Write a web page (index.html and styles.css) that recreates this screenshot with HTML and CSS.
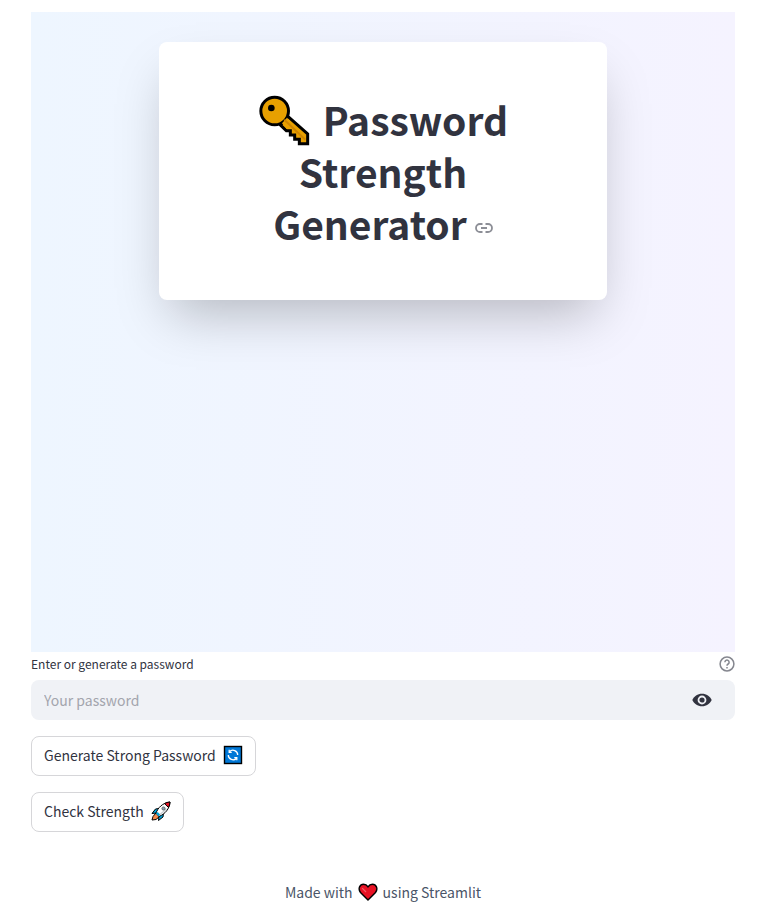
FILE: index.html
```html
<!DOCTYPE html>
<html lang="en">
<head>
<meta charset="utf-8">
<meta name="viewport" content="width=device-width, initial-scale=1">
<title>Password Strength Generator</title>
<link rel="stylesheet" href="styles.css">
</head>
<body>
<main class="page">
  <section class="hero">
    <div class="card">
      <h1 class="title">
        <svg class="key" viewBox="12 12 156 156" role="img" aria-label="Key">
          <path d="M99 74 161 129V158H136V145H122V132H109V119H97L80 103Z" fill="#e8a000" stroke="#000" stroke-width="9"/>
          <circle cx="62" cy="60" r="41.5" fill="#e8a000" stroke="#000" stroke-width="9"/>
          <path d="M84 97 99 80 110 92 102 114H98Z" fill="#e8a000"/>
          <path d="M91 86 154 146" stroke="#cf8500" stroke-width="6"/>
          <circle cx="52" cy="51" r="10" fill="#000"/>
        </svg>
        Password Strength Generator<a class="anchor" href="#" aria-label="Link to heading"><svg viewBox="0 0 18 10" fill="none" stroke="#8c8e96" stroke-width="1.8"><path d="M7.500 1H5a4 4 0 0 0 0 8h2.500M10.500 1H13a4 4 0 0 1 0 8h-2.500M6 5h6"/></svg></a>
      </h1>
    </div>
  </section>
  <form class="form">
    <div class="label-row">
      <label for="password">Enter or generate a password</label>
      <button class="icon-button" type="button" aria-label="Help">
        <svg class="help" viewBox="0 0 16 16" fill="none" stroke="#85878f" stroke-width="1.5"><circle cx="8" cy="8" r="6.900"/><path d="M5.900 6.200a2.100 2.100 0 1 1 3.200 1.800C8.300 8.500 8 8.800 8 9.700M8 11v1.400"/></svg>
      </button>
    </div>
    <div class="field">
      <input id="password" type="password" placeholder="Your password">
      <button class="icon-button" type="button" aria-label="Show password">
        <svg class="eye" viewBox="0 0 20 14"><path d="M10 .7C5.600.7 1.900 3.300.3 7c1.600 3.700 5.300 6.300 9.700 6.300s8.100-2.600 9.700-6.300C18.100 3.300 14.400.7 10 .7Z" fill="#31333f"/><circle cx="10" cy="7" r="3.500" fill="#31333f" stroke="#f0f2f6" stroke-width="1.800"/></svg>
      </button>
    </div>
    <button class="button" type="button">Generate Strong Password
      <svg class="emoji" viewBox="0 0 20 20" aria-hidden="true"><rect x="1.500" y="1.500" width="17" height="17" fill="#0078d7" stroke="#000" stroke-width="1.400"/><g fill="none" stroke="#fff" stroke-width="1.300"><path d="M6.500 6.800A4.700 4.700 0 0 1 14.700 10M13.500 13.200A4.700 4.700 0 0 1 5.300 10"/><path d="M6.200 4.800v2.500h2.500M13.800 15.200v-2.500h-2.500"/></g></svg>
    </button>
    <button class="button" type="button">Check Strength
      <svg class="emoji" viewBox="0 0 20 20" aria-hidden="true"><g stroke="#000" stroke-width="1" stroke-linejoin="round"><path d="M5 12 2 15.500 1 19l4-.5 3.500-3Z" fill="#f7894a"/><path d="M8 7.500 4.500 8 1 12.500l4.500-.5ZM12.500 12l-.5 4-4.500 3.500.5-5Z" fill="#00a4dc"/><path d="M5 12C7 7 11 2 19 1c-.5 7-5 12-11 14.500Z" fill="#fff"/><path d="M13.500 2.600C15 1.600 17 1.100 19 1c-.1 2-.6 3.900-1.500 5.500Z" fill="#e81224"/></g><path d="m5.800 11.800 2.500 2.500" stroke="#00a4dc" stroke-width="2.500"/><path d="m9 13.500 6.500-5.500" fill="none" stroke="#c8ced3" stroke-width="1.500"/><circle cx="12.500" cy="7.500" r="1.600" fill="#8aa2b2" stroke="#333" stroke-width=".6"/></svg>
    </button>
  </form>
  <footer class="footer">Made with
    <svg class="emoji" viewBox="0 0 20 20" aria-hidden="true"><path d="M10 18 2.500 10.500C-.5 6.500 2 2.200 5.500 2.200c2 0 3.500 1 4.500 2.600 1-1.600 2.500-2.600 4.500-2.600 3.500 0 6 4.300 3 8.300Z" fill="#e81224" stroke="#000" stroke-width="1.400"/><path d="M4.200 6.200 8 10" stroke="#f0606a" stroke-width="1.200"/></svg>
    using Streamlit</footer>
</main>
</body>
</html>
```
FILE: styles.css
```css
* { box-sizing: border-box; }

body {
  margin: 0;
  background: #fff;
  color: #31333f;
  font: 14px/24px "Noto Sans CJK SC", "Noto Sans", sans-serif;
}

.page { padding: 12px 35px 0 31px; }

.hero {
  min-height: 640px;
  padding: 30px 16px;
  background: linear-gradient(to right, #eef6ff, #f5f3ff);
}

.card {
  max-width: 448px;
  margin: 0 auto;
  padding: 51px 64px;
  border-radius: 8px;
  background: #fff;
  box-shadow: 0 25px 50px -12px rgba(0, 0, 0, 0.25);
}

.title {
  margin: 0;
  font-size: 39px;
  font-weight: 700;
  line-height: 52px;
  text-align: center;
}

.key {
  width: 52px;
  height: 52px;
  margin: -4px 4px -4px 0;
  vertical-align: -7px;
}

.anchor {
  display: inline-flex;
  margin-left: 8px;
  vertical-align: 7px;
}

.anchor svg { width: 18px; height: 10px; }

.form {
  display: flex;
  flex-direction: column;
  align-items: flex-start;
  gap: 16px;
}

.label-row, .field {
  display: flex;
  align-items: center;
  justify-content: space-between;
  width: 100%;
}

.label-row {
  height: 24px;
  margin-bottom: -12px;
  font-size: 12px;
}

.field {
  height: 40px;
  padding: 0 23px 0 13px;
  border-radius: 8px;
  background: #f0f2f6;
}

.field input {
  flex: 1;
  min-width: 0;
  padding: 0;
  border: 0;
  outline: 0;
  background: transparent;
  color: inherit;
  font: inherit;
}

.field input::placeholder { color: #a3a5ad; opacity: 1; }

.icon-button {
  display: flex;
  padding: 0;
  border: 0;
  background: none;
}

.help { width: 16px; height: 16px; }
.eye { width: 20px; height: 14px; }

.button {
  display: flex;
  align-items: center;
  gap: 7px;
  height: 40px;
  padding: 0 12px 2px;
  border: 1px solid #d6d6d9;
  border-radius: 8px;
  background: #fff;
  color: inherit;
  font: inherit;
}

.emoji { width: 20px; height: 20px; }

.footer {
  display: flex;
  align-items: center;
  justify-content: center;
  gap: 5px;
  margin-top: 48px;
  color: #4a5568;
}
```
